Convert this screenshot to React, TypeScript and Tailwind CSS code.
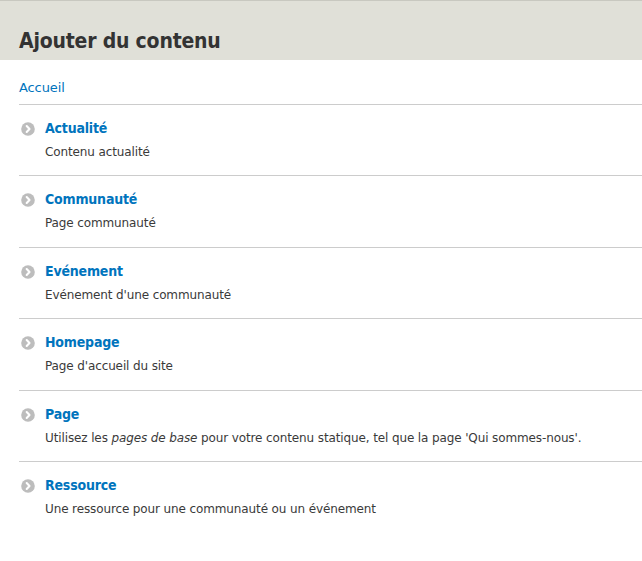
import React from "react";

type Item = { title: string; desc: React.ReactNode };

const items: Item[] = [
  { title: "Actualité", desc: "Contenu actualité" },
  { title: "Communauté", desc: "Page communauté" },
  { title: "Evénement", desc: "Evénement d'une communauté" },
  { title: "Homepage", desc: "Page d'accueil du site" },
  {
    title: "Page",
    desc: (
      <>
        Utilisez les <em>pages de base</em> pour votre contenu statique, tel que la page 'Qui sommes-nous'.
      </>
    ),
  },
  { title: "Ressource", desc: "Une ressource pour une communauté ou un événement" },
];

function ArrowIcon() {
  return (
    <svg width="14" height="14" viewBox="0 0 14 14" className="mt-[3px] ml-[2px] shrink-0">
      <circle cx="7" cy="7" r="6.8" fill="#bdbdbd" />
      <path d="M5.7 4.1 L8.5 7 L5.7 9.9" fill="none" stroke="#ffffff" strokeWidth="2.1" strokeLinecap="round" strokeLinejoin="round" />
    </svg>
  );
}

export default function App() {
  return (
    <div className="min-h-[561px] bg-white text-[#333] font-['DejaVu_Sans',sans-serif]">
      <div className="border-t border-[#c8c8c0] bg-[#e0e0d8] pl-[19px] pt-[28px] pb-[7px]">
        <h1 className="font-['DejaVu_Sans_Condensed','DejaVu_Sans',sans-serif] text-[21px] leading-[24px] font-bold tracking-[-0.2px] text-[#333]">
          Ajouter du contenu
        </h1>
      </div>
      <div className="pl-[19px]">
        <div className="pt-[20px] pb-[8px] text-[13px] leading-[16px] tracking-[-0.1px]">
          <a className="text-[#0074bd]">Accueil</a>
        </div>
        <div className="flex flex-col">
          {items.map((it) => (
            <div key={it.title} className="border-t border-[#cccccc] pt-[14px] pb-[15.4px] flex gap-[10px]">
              <ArrowIcon />
              <div className="flex flex-col">
                <a className="font-['DejaVu_Sans_Condensed','DejaVu_Sans',sans-serif] text-[14px] leading-[18px] font-bold tracking-[-0.2px] text-[#0074bd]">
                  {it.title}
                </a>
                <div className="mt-[7px] text-[12px] leading-[16px] tracking-[-0.12px] text-[#3a3a3a]">{it.desc}</div>
              </div>
            </div>
          ))}
        </div>
      </div>
    </div>
  );
}
